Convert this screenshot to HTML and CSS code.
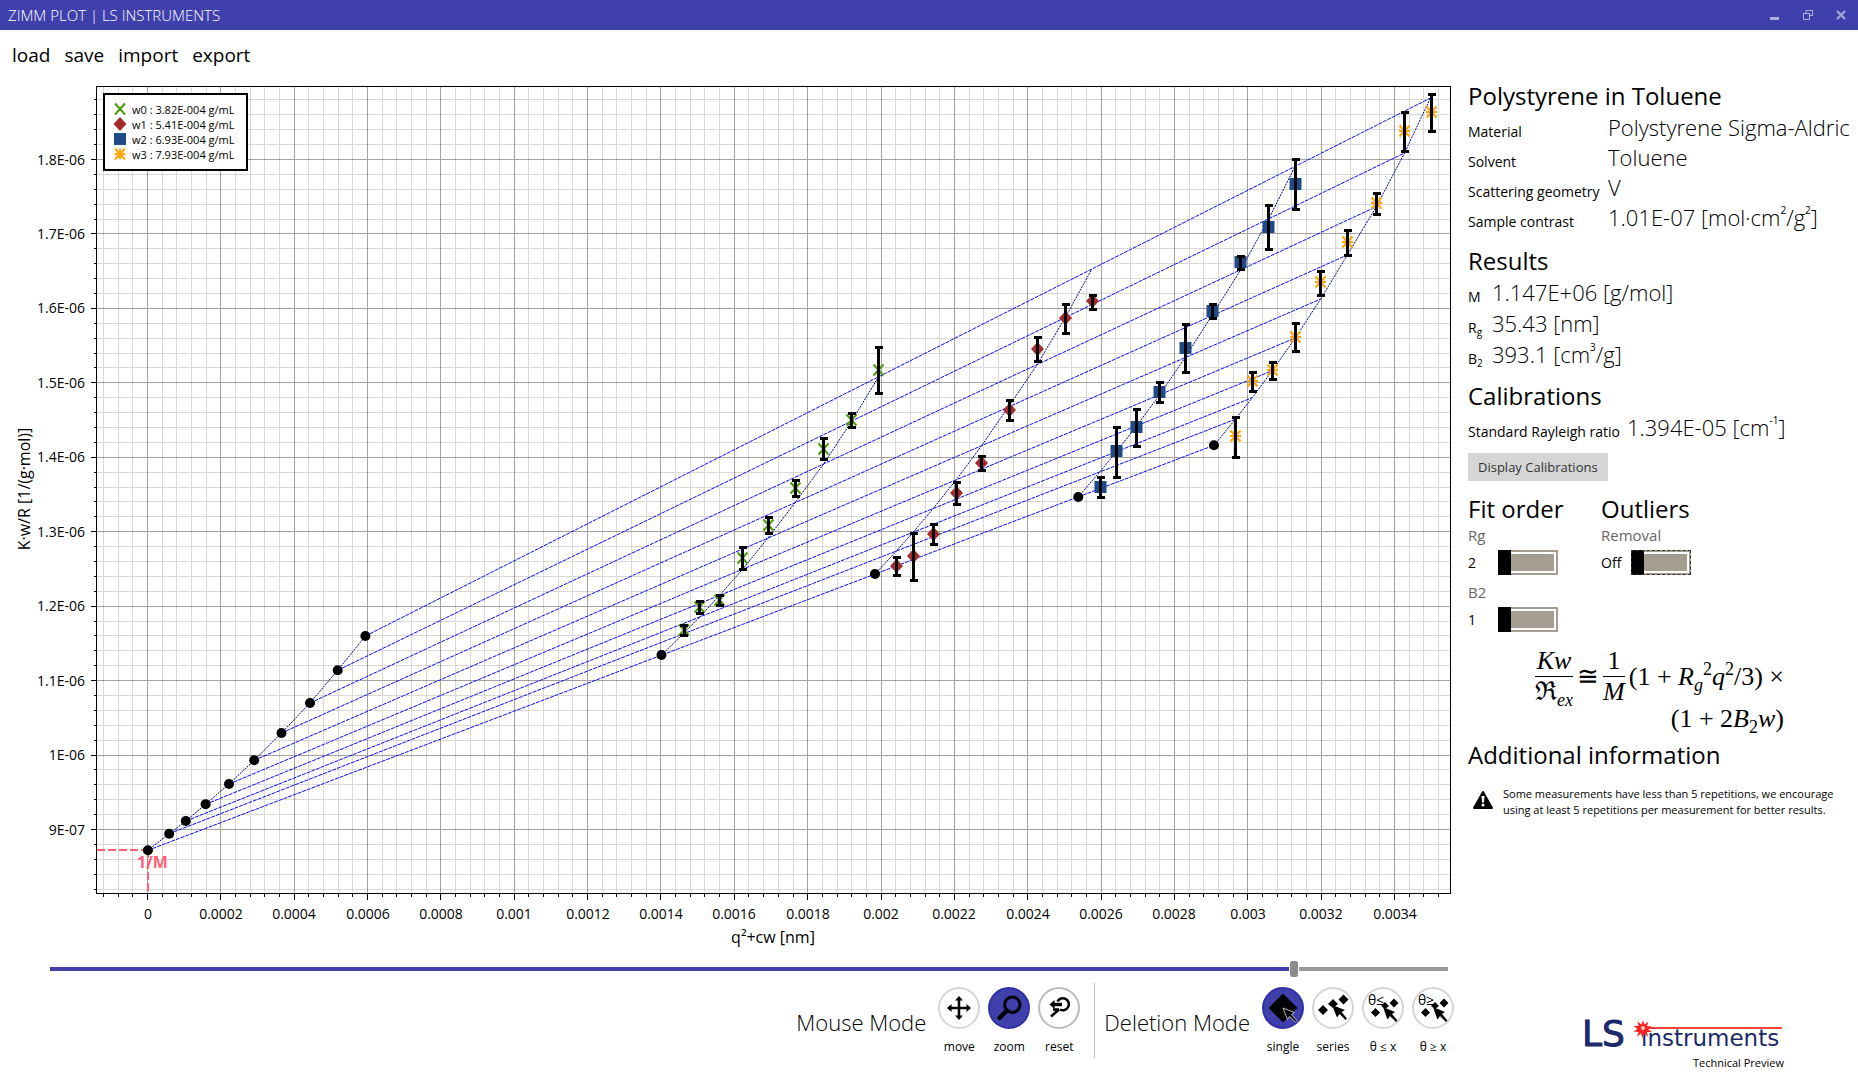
FILE: index.html
```html
<!DOCTYPE html>
<html lang="en">
<head>
<meta charset="utf-8">
<title>Zimm Plot | LS Instruments</title>
<link rel="stylesheet" href="styles.css">
</head>
<body>
<header class="titlebar">
  <span>ZIMM PLOT | LS INSTRUMENTS</span>
  <div class="window-buttons">
    <button type="button" aria-label="Minimize"><svg width="10" height="12" viewBox="0 0 10 12"><path d="M0 8h9v3H0z" fill="#b0b0e0"/></svg></button>
    <button type="button" aria-label="Restore"><svg width="10" height="12" viewBox="0 0 10 12"><path d="M3 4V2M3 1.500h6.500M9.500 1v6M7 6.500h3M.5 4v6.500h6V4M0 4.500h7" fill="none" stroke="#b0b0e0"/></svg></button>
    <button type="button" aria-label="Close"><svg width="10" height="12" viewBox="0 0 10 12"><path d="M1 2l8 8M9 2l-8 8" stroke="#a8a8dc" stroke-width="2"/></svg></button>
  </div>
</header>
<nav class="menu">
  <a href="#">load</a><a href="#">save</a><a href="#">import</a><a href="#">export</a>
</nav>
<div class="body">
  <main>
    <svg id="plot" class="plot" viewBox="0 80 1458 870" role="img" aria-label="Zimm plot"></svg>
    <input class="range" type="range" min="0" max="1000" value="893" aria-label="Plot constant c">
    <div class="toolbar">
      <div class="group">
        <h3>Mouse Mode</h3>
        <button type="button" class="tool"><span class="disc"><svg viewBox="-19 -19 38 38"><path d="M0-9V9M-9 0H9" stroke="#000" stroke-width="2.500"/><path d="M0-12l4 4.500h-8zM0 12l4-4.500h-8zM-12 0l4.500-4v8zM12 0l-4.500-4v8z"/></svg></span>move</button>
        <button type="button" class="tool on"><span class="disc"><svg viewBox="-19 -19 38 38"><g fill="none" stroke="#000"><circle cx="3.300" cy="-3.300" r="7.700" stroke-width="3"/><path d="M-2 2.500L-9.500 9.800" stroke-width="4.500" stroke-linecap="round"/></g></svg></span>zoom</button>
        <button type="button" class="tool grey"><span class="disc"><svg viewBox="-19 -19 38 38"><g fill="none" stroke="#000" stroke-width="2.500"><path d="M-1.500-6.500A6 6 0 1 1 1 1.500M0 1.500L-8 8.500M0 1.500h-6"/><path d="M-5-3.500h8" stroke-width="3.500"/></g><path d="M-9.500-3.500l5-4.500v9z"/></svg></span>reset</button>
      </div>
      <div class="group">
        <h3>Deletion Mode</h3>
        <button type="button" class="tool on"><span class="disc"><svg viewBox="-19 -19 38 38"><path d="M0-14.500L14.500 0 0 14.500-14.500 0z"/><path d="M0 0l11.500 4.500-3 2 5.500 6-1.500 1.500-6-5.500-2 3z" stroke="#bbb" stroke-width="1"/></svg></span>single</button>
        <button type="button" class="tool"><span class="disc"><svg viewBox="-19 -19 38 38"><path d="M-10-3l5 5-5 5-5-5zM0-9l5 5-5 4-5-4zM10.500-13.500l5 5-5 5-5-5z"/><path d="M-1-3l13 5-3.500 2 5.500 6.500-1.500 1.500-6-6-2.500 3.500z"/></svg></span>series</button>
        <button type="button" class="tool"><span class="disc"><svg viewBox="-19 -19 38 38"><path d="M-7.500 0l4.500 4.500-4.500 4.500-4.500-4.500zM2-6l4 4-4 3-4-3zM11-9.500l4.500 4.500-4.500 4.500-4.500-4.500z"/><path d="M0-1l12 5-3 2 5.500 6.500-1.500 1.500-6-6-2.500 3.500z"/><text x="-15" y="-3" font-size="14">θ≤</text></svg></span>θ ≤ x</button>
        <button type="button" class="tool"><span class="disc"><svg viewBox="-19 -19 38 38"><path d="M-7.500 0l4.500 4.500-4.500 4.500-4.500-4.500zM2-6l4 4-4 3-4-3zM11-9.500l4.500 4.500-4.500 4.500-4.500-4.500z"/><path d="M0-1l12 5-3 2 5.500 6.500-1.500 1.500-6-6-2.500 3.500z"/><text x="-15" y="-3" font-size="14">θ≥</text></svg></span>θ ≥ x</button>
      </div>
    </div>
  </main>
  <aside>
    <h2>Polystyrene in Toluene</h2>
    <dl class="facts sample">
      <dt>Material</dt><dd>Polystyrene Sigma-Aldric</dd>
      <dt>Solvent</dt><dd>Toluene</dd>
      <dt>Scattering geometry</dt><dd>V</dd>
      <dt>Sample contrast</dt><dd>1.01E-07 [mol·cm<sup>2</sup>/g<sup>2</sup>]</dd>
    </dl>
    <h2>Results</h2>
    <dl class="facts results">
      <dt>M</dt><dd>1.147E+06 [g/mol]</dd>
      <dt>R<sub>g</sub></dt><dd>35.43 [nm]</dd>
      <dt>B<sub>2</sub></dt><dd>393.1 [cm<sup>3</sup>/g]</dd>
    </dl>
    <h2>Calibrations</h2>
    <dl class="facts calibration">
      <dt>Standard Rayleigh ratio</dt><dd>1.394E-05 [cm<sup>-1</sup>]</dd>
    </dl>
    <button type="button" class="flat">Display Calibrations</button>
    <div class="options">
      <section>
        <h2>Fit order</h2>
        <label class="caption" for="rg">Rg</label>
        <div class="switch"><span>2</span><input id="rg" type="checkbox"></div>
        <label class="caption" for="b2">B2</label>
        <div class="switch"><span>1</span><input id="b2" type="checkbox"></div>
      </section>
      <section>
        <h2>Outliers</h2>
        <label class="caption" for="removal">Removal</label>
        <div class="switch"><span>Off</span><input id="removal" class="focused" type="checkbox"></div>
      </section>
    </div>
    <div class="formula">
      <div class="line">
        <span class="frac"><span><i>Kw</i></span><span>ℜ<sub><i>ex</i></sub></span></span>
        <span>≅</span>
        <span class="frac"><span>1</span><span><i>M</i></span></span>
        <span>(1 + <i>R<sub>g</sub></i><sup>2</sup><i>q</i><sup>2</sup>/3) ×</span>
      </div>
      <div class="line">(1 + 2<i>B</i><sub>2</sub><i>w</i>)</div>
    </div>
    <h2>Additional information</h2>
    <div class="note">
      <svg width="20" height="18" viewBox="0 0 20 18"><path d="M10 1L19 17H1z" stroke="#000" stroke-width="2" stroke-linejoin="round"/><path d="M8.500 5h3l-.6 6.500H9.100z" fill="#fff"/><circle cx="10" cy="14" r="1.500" fill="#fff"/></svg>
      <p>Some measurements have less than 5 repetitions, we encourage using at least 5 repetitions per measurement for better results.</p>
    </div>
    <footer class="brand">
      <svg width="202" height="48" viewBox="0 0 202 48" role="img" aria-label="LS instruments">
        <text class="ls" x="0" y="38">LS</text>
        <text class="ins" x="59" y="38">instruments</text>
        <path d="M62 20H200" stroke="#f0423c" stroke-width="2"/>
        <path d="M61 12l1.500 4.500 4-3-1.500 4.500 5 .5-4 2.500 4 3-5 0 1 4.500-4-3-1.500 4.500-1.500-4.500-4 3 1.500-4.500-5-.5 4-2.500-4-3 5 0-1-4.500 4 3z" fill="#f22"/>
        <circle cx="61" cy="20" r="2" fill="#fcc"/>
      </svg>
      <span>Technical Preview</span>
    </footer>
  </aside>
</div>
<script src="plot.js"></script>
</body>
</html>
```
FILE: styles.css
```css
* { box-sizing: border-box; }
body {
  margin: 0;
  min-height: 100vh;
  display: flex;
  flex-direction: column;
  background: #fff;
  color: #000;
  font-family: "Open Sans", "Noto Sans", sans-serif;
  font-size: 14px;
}
button { font: inherit; color: inherit; border: 0; padding: 0; background: none; }
h2, h3, dl, dd, p { margin: 0; font-weight: 400; }

.titlebar {
  height: 30px;
  padding: 0 7px 0 8px;
  display: flex;
  justify-content: space-between;
  align-items: center;
  background: #4040ad;
  color: #fff;
  font-size: 15px;
  font-weight: 300;
}
.window-buttons { display: flex; gap: 13px; }
.window-buttons button { width: 20px; height: 20px; display: grid; place-items: center; }

.menu {
  height: 50px;
  padding: 12px 12px 0;
  display: flex;
  gap: 14px;
  font-size: 19px;
  line-height: 26px;
}
.menu a { color: inherit; text-decoration: none; }

.body { flex: 1; display: flex; }
main { flex: 1; min-width: 0; display: flex; flex-direction: column; }
.plot { display: block; width: 100%; height: auto; }

.grid-minor { stroke: #000; stroke-opacity: .15; shape-rendering: crispEdges; }
.grid-major { stroke: #000; stroke-opacity: .36; shape-rendering: crispEdges; }
.axis { stroke: #000; fill: none; shape-rendering: crispEdges; }
.frame { stroke: #000; stroke-width: 1; fill: none; shape-rendering: crispEdges; }
.fan { stroke: #0a0aff; fill: none; stroke-dasharray: 4 1; }
.fit { stroke: #00008b; fill: none; stroke-dasharray: 2 1; }
.error { stroke: #000; stroke-width: 3; fill: none; shape-rendering: crispEdges; }
.intercept { stroke: #ff6078; stroke-width: 2; fill: none; stroke-dasharray: 8 3; shape-rendering: crispEdges; }
.intercept-label { fill: #ff6078; font-size: 16px; font-weight: 700; }
.tick { font-size: 14px; }
.axis-title { font-size: 16px; }
.legend-box { fill: #fff; stroke: #000; stroke-width: 2; shape-rendering: crispEdges; }
.legend { font-size: 11px; }

.range {
  appearance: none;
  height: 16px;
  margin: 11px 10px 6px 50px;
  background: linear-gradient(90deg, #4040ad 89%, #999 89%) center / 100% 4px no-repeat;
}
.range::-webkit-slider-thumb { appearance: none; width: 10px; height: 16px; background: #8c8c8c; border: solid #fff; border-width: 0 1px; border-radius: 3px; }

.toolbar { display: flex; justify-content: flex-end; }
.group { display: flex; height: 75px; padding-left: 9px; }
.group + .group { border-left: 1px solid #bbb; }
.group:first-child { padding-right: 10px; }
.group h3 { margin-right: 8px; padding-top: 23px; font-size: 22px; line-height: 32px; font-weight: 300; }
.tool { width: 50px; padding-top: 4px; display: flex; flex-direction: column; align-items: center; gap: 9px; font-size: 12px; line-height: 18px; }
.disc { width: 42px; height: 42px; border: 2px solid #d5d5d5; border-radius: 50%; }
.disc svg { display: block; width: 38px; height: 38px; }
.grey .disc { border-color: #bbb; }
.on .disc { background: #4040ad; border-color: #3030a5; }

aside { width: 400px; padding: 0 0 10px 10px; display: flex; flex-direction: column; }
h2 { font-size: 24px; line-height: 32px; }
.facts { display: grid; align-items: start; white-space: nowrap; }
.facts dt { padding-top: 10px; font-size: 14px; line-height: 20px; }
.facts dd { font-size: 22px; font-weight: 300; line-height: 30px; }
.facts sup { font-size: 10px; font-weight: 400; line-height: 0; vertical-align: 12px; }
.facts sub { font-size: 10px; line-height: 0; vertical-align: -3px; }
.sample { grid-template-columns: 140px 1fr; margin-bottom: 13px; }
.results { grid-template-columns: 24px 1fr; row-gap: 1px; margin-bottom: 11px; }
.calibration { grid-template-columns: 159px 1fr; margin-bottom: 11px; }
.flat { align-self: flex-start; height: 28px; padding: 0 10px; background: #d5d5d5; color: #333; font-size: 13px; }
.options { display: flex; margin-top: 12px; }
.options section { width: 133px; }
.caption { display: block; color: #666; font-size: 15px; line-height: 20px; }
.switch { display: flex; align-items: center; height: 25px; margin: 5px 0 7px; }
.switch span { min-width: 30px; font-size: 14px; }
.switch input {
  appearance: none;
  width: 60px;
  height: 25px;
  margin: 0;
  background:
    linear-gradient(#000, #000) left / 13px 100% no-repeat,
    linear-gradient(#a59d90, #a59d90) center / calc(100% - 8px) calc(100% - 8px) no-repeat,
    linear-gradient(#fff, #fff) center / calc(100% - 4px) calc(100% - 4px) no-repeat,
    #a59d90;
}
.switch .focused { outline: 1px dashed #333; outline-offset: -1px; }

.formula { width: 316px; margin: 7px 0 8px; font: 26px/30px "Liberation Serif", serif; }
.formula .line { display: flex; justify-content: flex-end; align-items: center; gap: 4px; white-space: pre; }
.formula .line + .line { display: block; text-align: right; line-height: 24px; }
.frac { display: flex; flex-direction: column; text-align: center; }
.frac > span:first-child { border-bottom: 1px solid #000; }
.formula sub, .formula sup { font-size: 18px; line-height: 0; }
.note { display: flex; gap: 10px; margin-top: 15px; padding-left: 5px; font-size: 11px; line-height: 16px; }
.note svg { flex: none; margin-top: 5px; }
.note p { width: 350px; }
.brand { margin-top: auto; width: 316px; display: flex; flex-direction: column; align-items: flex-end; font-size: 11px; line-height: 14px; }
.ls, .ins { fill: #1b2a6b; stroke: #1b2a6b; font-family: "DejaVu Sans", sans-serif; }
.ls { font-size: 36px; stroke-width: 1; }
.ins { font-size: 23px; stroke-width: 0; }
```
FILE: plot.js
```js
(function () {
  var svg = document.getElementById('plot');
  var NS = 'http://www.w3.org/2000/svg';
  function add(name, attrs, text) {
    var el = document.createElementNS(NS, name);
    for (var k in attrs) el.setAttribute(k, attrs[k]);
    if (text) el.textContent = text;
    svg.appendChild(el);
  }
  function snap(v) { return Math.floor(v) + 0.5; }

  var L = 96.5, R = 1450.5, T = 86.5, B = 893.5;
  var x0 = 147.5, dx = 73.353, y0 = 829.5, dy = 74.444;
  var minor = '', major = '', ticks = '', i, x, y;

  for (i = -3; i <= 88; i++) {
    x = snap(x0 + i * dx / 5);
    if (i % 5 === 0) major += 'M' + x + ' ' + T + 'V' + B; else minor += 'M' + x + ' ' + T + 'V' + B;
    ticks += 'M' + x + ' ' + B + 'v' + (i % 5 === 0 ? 6 : 3);
  }
  for (i = -4; i <= 49; i++) {
    y = snap(y0 - i * dy / 5);
    if (i % 5 === 0) major += 'M' + L + ' ' + y + 'H' + R; else minor += 'M' + L + ' ' + y + 'H' + R;
    ticks += 'M' + L + ' ' + y + 'h' + (i % 5 === 0 ? -6 : -3);
  }
  add('path', { 'class': 'grid-minor', d: minor });
  add('path', { 'class': 'grid-major', d: major });
  add('path', { 'class': 'axis', d: ticks });

  for (i = 0; i <= 17; i++) {
    add('text', { 'class': 'tick', x: Math.round(x0 + i * dx), y: 919, 'text-anchor': 'middle' }, String(+(i * 0.0002).toFixed(4)));
  }
  for (i = 0; i <= 9; i++) {
    var label = i === 0 ? '9E-07' : (1 + (i - 1) / 10).toFixed(1).replace('.0', '') + 'E-06';
    add('text', { 'class': 'tick', x: 85, y: Math.round(y0 - i * dy) + 5, 'text-anchor': 'end' }, label);
  }
  add('text', { 'class': 'axis-title', x: 773, y: 943, 'text-anchor': 'middle' }, 'q²+cw [nm]');
  add('text', { 'class': 'axis-title', x: 0, y: 0, 'text-anchor': 'middle', transform: 'translate(30 489) rotate(-90)' }, 'K·w/R [1/(g·mol)]');

  /* extrapolated points: start at w = 0, end on the highest concentration */
  var fan = [
    [147.9, 850.3, 1214, 445.3], [169.2, 833.7, 1235.3, 419.3], [185.8, 821, 1252.3, 397.7],
    [205.6, 804.3, 1272.3, 370.7], [229, 784, 1295.3, 338], [254.2, 760.3, 1320.7, 299],
    [281.5, 733, 1347.3, 255], [310, 703, 1376.3, 206.7], [337.7, 670.3, 1404.5, 153], [365.4, 636, 1430.5, 98]
  ];
  fan.forEach(function (f) {
    add('path', { 'class': 'fan', d: 'M' + f[0] + ' ' + f[1] + 'L' + f[2] + ' ' + f[3] });
  });
  [0, 0.4818, 0.682, 0.8728, 1].forEach(function (t) {
    add('path', { 'class': 'fit', d: 'M' + fan.map(function (f) {
      return (f[0] + t * (f[2] - f[0])).toFixed(1) + ' ' + (f[1] + t * (f[3] - f[1])).toFixed(1);
    }).join('L') });
  });

  function marker(kind, x, y) {
    var p = 'translate(' + x + ' ' + y + ')';
    if (kind === 0) add('path', { transform: p, d: 'M-5-5.500L5 5.500M5-5.500L-5 5.500', stroke: '#4e9a06', 'stroke-width': 2 });
    if (kind === 1) add('path', { transform: p, d: 'M0-7L6.500 0 0 7-6.500 0z', fill: '#a52a2a' });
    if (kind === 2) add('path', { transform: p, d: 'M-6-6H6V6H-6z', fill: '#204a87' });
    if (kind === 3) add('path', { transform: p, d: 'M-5-5.500L5 5.500M5-5.500L-5 5.500M-5.500 0H5.500M0-5.500V5.500', stroke: '#ffa500', 'stroke-width': 2 });
  }

  /* x, value, top and bottom of the error bar */
  var series = [
    [[684, 630, 625, 635], [699.5, 607, 601, 613], [719.5, 600, 595, 605], [742.5, 558, 547, 569], [768.5, 525, 517, 533],
     [795.5, 488, 480, 496], [823.5, 449, 438, 459], [851.5, 420, 413, 427], [878.5, 370, 347, 393]],
    [[896.5, 566, 557, 575], [913.5, 556, 533, 580], [933.5, 534, 524, 544], [956.5, 493, 482, 504], [981.5, 463, 456, 470],
     [1009.5, 410, 400, 420], [1037.5, 349, 337, 361], [1065.5, 318, 304, 333], [1092.5, 301, 295, 309]],
    [[1100.5, 487, 477, 497], [1116.5, 451, 427, 477], [1136.5, 427, 409, 446], [1159.5, 392, 382, 402], [1185.5, 348, 324, 372],
     [1212.5, 311, 304, 318], [1240.5, 262, 256, 269], [1268.5, 227, 205, 249], [1295.5, 184, 159, 209]],
    [[1235.5, 436, 417, 457], [1252.5, 381, 372, 391], [1272.5, 370, 362, 379], [1295.5, 337, 323, 351], [1320.5, 282, 271, 295],
     [1347.5, 242, 230, 255], [1376.5, 203, 193, 214], [1404.5, 131, 112, 151], [1431.5, 112, 94, 131]]
  ];
  series.forEach(function (points, kind) {
    points.forEach(function (p) {
      marker(kind, p[0], p[1]);
      add('path', { 'class': 'error', d: 'M' + p[0] + ' ' + (p[2] + 0.5) + 'V' + (p[3] + 0.5) + 'M' + (p[0] - 4) + ' ' + (p[2] + 0.5) + 'h8M' + (p[0] - 4) + ' ' + (p[3] + 0.5) + 'h8' });
    });
  });

  add('path', { 'class': 'intercept', d: 'M97 850H148' });
  add('path', { 'class': 'intercept', d: 'M148 850V893' });
  add('text', { 'class': 'intercept-label', x: 137, y: 868 }, '1/M');
  fan.map(function (f) { return [f[0], f[1]]; })
    .concat([[661.5, 655], [875, 574], [1078.3, 497], [1214, 445.3]])
    .forEach(function (p) { add('circle', { cx: p[0], cy: p[1], r: 5 }); });
  add('path', { 'class': 'frame', d: 'M' + L + ' ' + T + 'H' + R + 'V' + B + 'H' + L + 'z' });

  add('rect', { 'class': 'legend-box', x: 104, y: 94, width: 143, height: 76 });
  ['w0 : 3.82E-004 g/mL', 'w1 : 5.41E-004 g/mL', 'w2 : 6.93E-004 g/mL', 'w3 : 7.93E-004 g/mL'].forEach(function (t, k) {
    marker(k, 120, 109 + k * 15);
    add('text', { 'class': 'legend', x: 132, y: 114 + k * 15 }, t);
  });
}());
```
